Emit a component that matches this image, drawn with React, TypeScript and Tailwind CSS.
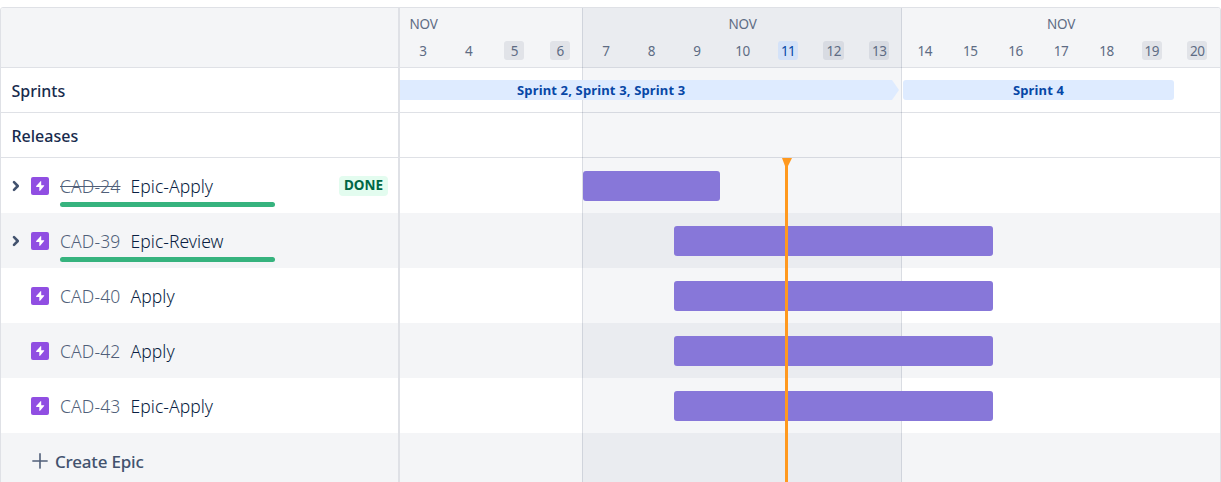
import React from "react";

type Epic = {
  id: string;
  name: string;
  done?: boolean;
  expandable?: boolean;
  bar: string;
};

const epics: Epic[] = [
  { id: "CAD-24", name: "Epic-Apply", done: true, expandable: true, bar: "ml-[183px] w-[137px]" },
  { id: "CAD-39", name: "Epic-Review", expandable: true, bar: "ml-[274px] w-[319px]" },
  { id: "CAD-40", name: "Apply", bar: "ml-[274px] w-[319px]" },
  { id: "CAD-42", name: "Apply", bar: "ml-[274px] w-[319px]" },
  { id: "CAD-43", name: "Epic-Apply", bar: "ml-[274px] w-[319px]" },
];

const TODAY = 11;
const weekends = [5, 6, 12, 13, 19, 20];

function EpicIcon() {
  return (
    <svg className="size-[18px] shrink-0" viewBox="0 0 18 18">
      <rect width="18" height="18" rx="2" fill="#904ee2" />
      <path
        d="M9.6 4.2 5.2 9.1c-.3.4-.1.8.3.8h2.8v3.6c0 .5.5.6.8.3l4-4.8c.3-.4.1-.8-.3-.8h-2.6V4.5c0-.5-.4-.6-.6-.3Z"
        fill="#fff"
      />
    </svg>
  );
}

function Chevron() {
  return (
    <svg className="ml-px h-[12px] w-[9px]" viewBox="0 0 9 12" fill="none">
      <path d="m2 2.2 3.8 3.8L2 9.8" stroke="#42526e" strokeWidth="2.6" strokeLinecap="round" strokeLinejoin="round" />
    </svg>
  );
}

function EpicRow({ epic, striped }: { epic: Epic; striped: boolean }) {
  return (
    <div className={`flex h-[55px] px-[10px] ${striped ? "bg-[#f4f5f7]" : "bg-white"}`}>
      <div className="flex h-[56px] w-5 items-center">{epic.expandable && <Chevron />}</div>
      <div className="flex h-[56px] items-center"><EpicIcon /></div>
      <div className="ml-[11px] flex w-[215px] flex-col">
        <div className="flex h-[44px] items-end whitespace-nowrap pb-px text-[17.5px] font-light leading-[30px]">
          <span className="w-[70.5px] tracking-[0.15px] text-[#505f79]">
            <span className={epic.done ? "line-through decoration-1" : ""}>{epic.id}</span>
          </span>
          <span className="tracking-[0.05px] text-[#091e42]">{epic.name}</span>
        </div>
        {epic.expandable && <div className="h-[5px] rounded-full bg-[#36b37e]" />}
      </div>
      {epic.done && (
        <div className="ml-auto mt-[18px] flex h-5 w-[49px] items-center justify-center rounded-[4px] bg-[#e3fcef] pb-[2px] text-[13.5px] font-bold leading-[18px] text-[#006644]">
          DONE
        </div>
      )}
    </div>
  );
}

function Day({ day }: { day: number }) {
  const color =
    day === TODAY
      ? "bg-[#d4e2f8] text-[#0747a6]"
      : weekends.includes(day)
        ? "bg-[#091e42]/8 text-[#5e6c84]"
        : "text-[#5e6c84]";
  return (
    <div className="flex flex-1 justify-center">
      <span className={`flex h-[19px] min-w-5 items-center justify-center rounded-[3px] px-[3px] pt-[2px] text-[13.5px] tracking-[-0.5px] ${color}`}>
        {day}
      </span>
    </div>
  );
}

function Week({ days, className, labelClass }: { days: number[]; className: string; labelClass: string }) {
  return (
    <div className={`h-[59px] shrink-0 ${className}`}>
      <div className={`mt-[6px] h-5 text-[13.5px] leading-5 tracking-[-0.2px] text-[#5e6c84] ${labelClass}`}>NOV</div>
      <div className="mt-[7px] flex">
        {days.map((d) => <Day key={d} day={d} />)}
      </div>
    </div>
  );
}

function Heading({ children }: { children: React.ReactNode }) {
  return (
    <div className="flex h-[45px] items-center border-b border-[#dfe1e6] pl-[10.5px] pt-[2px] text-[16px] font-medium text-[#172b4d]">
      {children}
    </div>
  );
}

export default function App() {
  return (
    <div className="h-[482px] w-[1221px] overflow-hidden bg-white pt-[7px] font-['Noto_Sans','Open_Sans',sans-serif]">
      <div className="flex h-[500px] overflow-hidden rounded-t-[3px] border border-[#dfe1e6]">
        <aside className="w-[399px] shrink-0 border-r-2 border-[#dfe1e6]">
          <div className="h-[60px] border-b border-[#dfe1e6] bg-[#f4f5f7]" />
          <Heading>Sprints</Heading>
          <Heading>Releases</Heading>
          {epics.map((e, i) => <EpicRow key={e.id} epic={e} striped={i % 2 === 1} />)}
          <div className="flex h-[70px] items-start bg-[#f4f5f7] pl-[31px] pt-[13px]">
            <svg className="mt-[7px] size-4" viewBox="0 0 16 16" stroke="#505f79" strokeWidth="1.6" strokeLinecap="round">
              <path d="M8 .9v14.2M.9 8h14.2" />
            </svg>
            <span className="ml-[7px] mt-px text-[17px] font-medium leading-[30px] tracking-[-0.2px] text-[#42526e]">Create Epic</span>
          </div>
        </aside>

        <main className="relative w-[820px] shrink-0">
          <div className="absolute inset-0">
            <div className="h-[60px] border-b border-[#dfe1e6] bg-[#f4f5f7]" />
            <div className="h-[45px] border-b border-[#dfe1e6]" />
            <div className="h-[45px] border-b border-[#dfe1e6]" />
            {epics.map((e, i) => <div key={e.id} className={`h-[55px] ${i % 2 ? "bg-[#f4f5f7]" : "bg-white"}`} />)}
            <div className="h-[70px] bg-[#f4f5f7]" />
          </div>
          <div className="absolute inset-0 flex">
            <div className="w-[182px]" />
            <div className="w-[320px] border-x border-[#091e42]/15 bg-[#091e42]/4 bg-clip-padding" />
          </div>

          <div className="relative">
            <div className="flex h-[60px]">
              <Week days={[3, 4, 5, 6]} className="w-[183px]" labelClass="pl-[9.5px]" />
              <Week days={[7, 8, 9, 10, 11, 12, 13]} className="w-[319px]" labelClass="text-center" />
              <Week days={[14, 15, 16, 17, 18, 19, 20]} className="w-[318px]" labelClass="text-center" />
            </div>
            <div className="flex h-[45px] pt-3 text-[13px] font-bold leading-5 tracking-[0.15px] text-[#0747a6]">
              <div className="h-5 w-[500px] bg-[#deebff] pl-[117px] [clip-path:polygon(0_0,492px_0,499px_50%,492px_100%,0_100%)]">
                Sprint 2, Sprint 3, Sprint 3
              </div>
              <div className="ml-[3px] h-5 w-[271px] rounded-[3px] bg-[#deebff] text-center">Sprint 4</div>
            </div>
            <div className="h-[45px]" />
            {epics.map((e) => (
              <div key={e.id} className="h-[55px] pt-[13px]">
                <div className={`h-[30px] rounded-[3px] bg-[#8777d9] ${e.bar}`} />
              </div>
            ))}
          </div>
          <svg className="absolute left-[382px] top-[150px] h-[350px] w-[10px]" viewBox="0 0 10 350" fill="#ff991f">
            <path d="M0 0h10L6 8v342H3V8Z" />
          </svg>
        </main>
      </div>
    </div>
  );
}
